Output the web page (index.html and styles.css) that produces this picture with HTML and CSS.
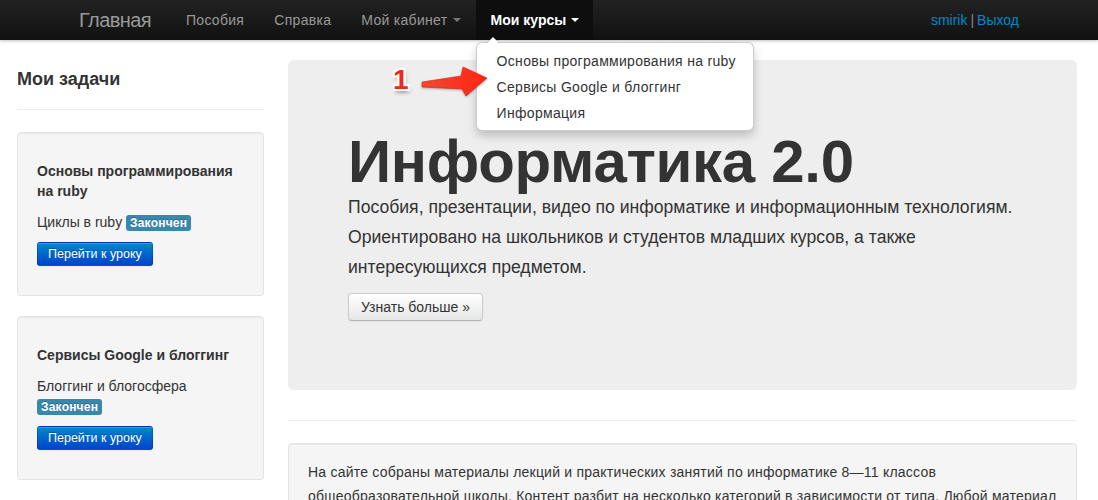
FILE: index.html
```html
<!DOCTYPE html>
<html lang="ru">
<head>
<meta charset="utf-8">
<title>Информатика 2.0</title>
<link rel="stylesheet" href="styles.css">
</head>
<body>
<header class="navbar">
  <div class="nav-inner">
    <a class="brand" href="#">Главная</a>
    <ul class="nav">
      <li><a href="#">Пособия</a></li>
      <li><a href="#">Справка</a></li>
      <li><a href="#">Мой кабинет <b class="caret"></b></a></li>
      <li class="active dropdown">
        <a href="#">Мои курсы <b class="caret"></b></a>
        <ul class="dropdown-menu">
          <li><a href="#">Основы программирования на ruby</a></li>
          <li><a href="#">Сервисы Google и блоггинг</a></li>
          <li><a href="#">Информация</a></li>
        </ul>
      </li>
    </ul>
    <div class="user"><a href="#">smirik</a><span class="sep">|</span><a href="#">Выход</a></div>
  </div>
</header>

<div class="page">
  <aside class="sidebar">
    <h3 class="side-title">Мои задачи</h3>
    <hr class="rule">
    <div class="well">
      <h4 class="task-title">Основы программирования на&nbsp;ruby</h4>
      <p class="task-lesson">Циклы в ruby <span class="label">Закончен</span></p>
      <a class="btn-primary" href="#">Перейти к уроку</a>
    </div>
    <div class="well">
      <h4 class="task-title">Сервисы Google и блоггинг</h4>
      <p class="task-lesson">Блоггинг и блогосфера<br><span class="label">Закончен</span></p>
      <a class="btn-primary" href="#">Перейти к уроку</a>
    </div>
  </aside>

  <main class="content">
    <section class="hero">
      <h1>Информатика 2.0</h1>
      <p>Пособия, презентации, видео по информатике и информационным технологиям.<br>Ориентировано на школьников и студентов младших курсов, а также<br>интересующихся предметом.</p>
      <a class="btn" href="#">Узнать больше »</a>
    </section>
    <hr class="rule main-rule">
    <div class="well about">
      <p>На сайте собраны материалы лекций и практических занятий по информатике 8—11 классов<br>общеобразовательной школы. Контент разбит на несколько категорий в зависимости от типа. Любой материал</p>
    </div>
  </main>

  <div class="annotation">
    <span class="num">1</span>
    <svg class="arrow" width="70" height="34" viewBox="0 0 70 34">
      <defs>
        <linearGradient id="ag" x1="0" y1="0" x2="1" y2="0">
          <stop offset="0" stop-color="#f04a30"/>
          <stop offset="1" stop-color="#ff2414"/>
        </linearGradient>
      </defs>
      <polygon points="2,17 41,11 43,2 67,13 46,31 42,24 2,22" fill="url(#ag)" stroke="#dc2010" stroke-width="0.6" stroke-linejoin="round"/>
    </svg>
  </div>
</div>
</body>
</html>
```

FILE: styles.css
```css
* { box-sizing: border-box; }

html, body {
  margin: 0;
  padding: 0;
}

body {
  font-family: "Liberation Sans", Arial, sans-serif;
  font-size: 14px;
  line-height: 20px;
  color: #333;
  background: #fff;
}

a { text-decoration: none; }

/* ---------- navbar ---------- */
.navbar {
  height: 40px;
  background: linear-gradient(to bottom, #222 0%, #111 100%);
  box-shadow: 0 1px 3px rgba(0,0,0,0.25);
  position: relative;
  z-index: 10;
}

.nav-inner {
  width: 940px;
  margin: 0 auto;
  display: flex;
  align-items: stretch;
  height: 40px;
}

.brand {
  margin-left: -20px;
  padding: 0 20px;
  font-size: 20px;
  line-height: 40px;
  color: #999;
  font-weight: 300;
  letter-spacing: -0.6px;
}

.nav {
  list-style: none;
  margin: 0;
  padding: 0;
  display: flex;
}

.nav > li {
  position: relative;
}

.nav > li > a {
  display: block;
  padding: 0 15px;
  line-height: 40px;
  color: #999;
  font-size: 14px;
  letter-spacing: 0.3px;
}

.nav > li.active > a {
  background: #0e0e0e;
  color: #fff;
  font-weight: bold;
  letter-spacing: 0;
  padding: 0 14px 0 15px;
}

.caret {
  display: inline-block;
  width: 0;
  height: 0;
  vertical-align: middle;
  margin-top: -2px;
  margin-left: 1px;
  border-top: 4px solid #777;
  border-left: 4px solid transparent;
  border-right: 4px solid transparent;
}

.active .caret { border-top-color: #fff; }

.dropdown-menu {
  position: absolute;
  top: 42px;
  left: 0;
  width: 278px;
  margin: 0;
  padding: 5px 0 4px;
  list-style: none;
  background: #fff;
  border: 1px solid rgba(0,0,0,0.2);
  border-radius: 6px;
  box-shadow: 0 5px 10px rgba(0,0,0,0.2);
}

.dropdown-menu::before {
  content: "";
  position: absolute;
  top: -7px;
  left: 9px;
  border-left: 7px solid transparent;
  border-right: 7px solid transparent;
  border-bottom: 7px solid rgba(0,0,0,0.2);
}

.dropdown-menu::after {
  content: "";
  position: absolute;
  top: -6px;
  left: 10px;
  border-left: 6px solid transparent;
  border-right: 6px solid transparent;
  border-bottom: 6px solid #fff;
}

.dropdown-menu a {
  display: block;
  padding: 3px 20px;
  line-height: 20px;
  color: #333;
  font-size: 14px;
  letter-spacing: 0.3px;
  white-space: nowrap;
}

.user {
  margin-left: auto;
  line-height: 40px;
  font-size: 14px;
}

.user a { color: #0088cc; }

.user .sep {
  color: #888;
  margin: 0 3px;
}

/* ---------- page ---------- */
.page {
  position: relative;
  display: grid;
  grid-template-columns: 247px minmax(0, 1fr);
  column-gap: 24px;
  padding: 19px 21px 0 17px;
}

.side-title {
  margin: 10px 0 0;
  font-size: 18px;
  line-height: 20px;
  font-weight: bold;
  color: #333;
}

.rule {
  border: 0;
  border-top: 1px solid #eee;
  border-bottom: 1px solid #fff;
  margin: 20px 0 21px;
  height: 0;
}

.well {
  background: #f5f5f5;
  border: 1px solid #e3e3e3;
  border-radius: 4px;
  box-shadow: inset 0 1px 1px rgba(0,0,0,0.05);
  padding: 19px;
  margin-bottom: 20px;
}

.sidebar .well {
  padding-bottom: 29px;
}

.task-title {
  margin: 9px 0 11px;
  font-size: 14px;
  line-height: 20px;
  font-weight: bold;
  color: #333;
}

.task-lesson {
  margin: 0 0 10px;
}

.label {
  display: inline-block;
  background: #3a87ad;
  color: #fff;
  font-weight: bold;
  font-size: 12px;
  line-height: 16px;
  padding: 0 4px;
  border-radius: 3px;
  letter-spacing: 0.2px;
  text-shadow: 0 -1px 0 rgba(0,0,0,0.25);
  vertical-align: baseline;
}

.btn-primary {
  display: inline-block;
  padding: 2px 10px;
  font-size: 12.5px;
  line-height: 18px;
  color: #fff;
  background: linear-gradient(to bottom, #0088cc, #0044cc);
  border: 1px solid rgba(0,0,0,0.15);
  border-bottom-color: rgba(0,0,0,0.3);
  border-radius: 3px;
  text-shadow: 0 -1px 0 rgba(0,0,0,0.25);
  box-shadow: inset 0 1px 0 rgba(255,255,255,0.2), 0 1px 2px rgba(0,0,0,0.05);
}

/* ---------- hero ---------- */
.hero {
  background: #eee;
  border-radius: 6px;
  padding: 60px 60px 69px;
  margin-top: 1px;
}

.hero h1 {
  margin: 12px 0 0;
  font-size: 60px;
  line-height: 60px;
  letter-spacing: -0.3px;
  font-weight: bold;
  color: #333;
}

.hero p {
  margin: 0 0 11px;
  font-size: 17.6px;
  line-height: 30px;
  font-weight: 300;
  color: #333;
  white-space: nowrap;
}

.btn {
  display: inline-block;
  padding: 3px 12px;
  font-size: 14px;
  line-height: 20px;
  color: #333;
  background: linear-gradient(to bottom, #ffffff, #e6e6e6);
  border: 1px solid #ccc;
  border-bottom-color: #b3b3b3;
  border-radius: 4px;
  box-shadow: inset 0 1px 0 rgba(255,255,255,0.2), 0 1px 2px rgba(0,0,0,0.05);
}

.main-rule {
  margin: 30px 0 21px;
}

.about {
  padding-top: 16px;
}

.about p {
  margin: 0;
  line-height: 24px;
  letter-spacing: 0.22px;
  white-space: nowrap;
}

/* ---------- annotation ---------- */
.annotation {
  position: absolute;
  left: 393px;
  top: 26px;
  z-index: 20;
  display: flex;
  align-items: flex-start;
}

.num {
  font-size: 28px;
  font-weight: bold;
  color: #ee2a1c;
  line-height: 28px;
  text-shadow:
    -2px 0 0 #fff, 2px 0 0 #fff, 0 -2px 0 #fff, 0 2px 0 #fff,
    -2px -2px 0 #fff, 2px 2px 0 #fff, -2px 2px 0 #fff, 2px -2px 0 #fff,
    1px 3px 4px rgba(0,0,0,0.5);
}

.arrow {
  margin-left: 11px;
  margin-top: -1px;
  filter: drop-shadow(0 1px 1px rgba(0,0,0,0.3));
}
```
